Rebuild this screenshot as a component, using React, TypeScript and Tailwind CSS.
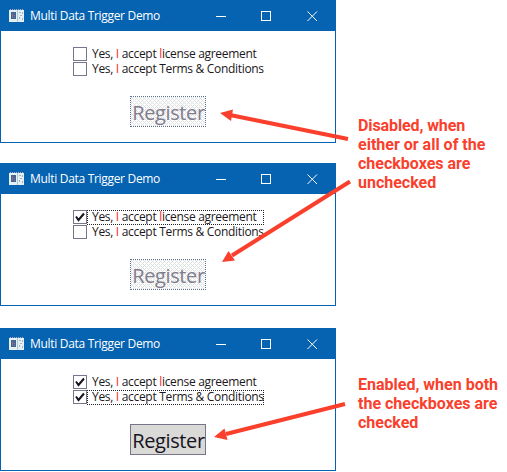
import React from "react";

type DemoProps = { id: string; first: boolean; second: boolean; focus: 0 | 1 | 2 };

const sans = "font-['Open_Sans','Noto_Sans',sans-serif]";

function AppIcon() {
  return (
    <svg width="16" height="14" viewBox="0 0 16 14" shapeRendering="crispEdges" className="shrink-0">
      <path d="M1 0.5H15" stroke="#b9a9c0" strokeDasharray="1 1" />
      <rect x="0" y="1" width="15" height="12" fill="#e4f0f4" />
      <rect x="2" y="3" width="5" height="7" fill="#44658f" />
      <path d="M3 4h1v2h2v1H4v2H3zM5 8h1v1H5z" fill="#836b91" />
      <rect x="8" y="1" width="1" height="12" fill="#a9c8da" />
      <path d="M10 3h2v1h-2zM11 6h2v1h-2zM10 8h1v2h-1zM13 3h1v2h-1zM13 9h1v2h-1z" fill="#9bb4c1" />
    </svg>
  );
}

function TitleBar() {
  return (
    <header className="flex h-[31px] items-center bg-[#0563b1] pl-[9px] text-white">
      <AppIcon />
      <span className={`${sans} ml-[5px] w-[170px] whitespace-nowrap text-[12px] leading-[16px] tracking-[-0.31px]`}>
        Multi Data Trigger Demo
      </span>
      <svg width="102" height="12" viewBox="0 0 102 12" fill="none" stroke="white" className="ml-[16px] shrink-0">
        <path d="M0 6.5h10" />
        <rect x="45.500" y="1.500" width="9" height="9" />
        <path d="M91.500 1.500l9.500 9.500M101 1.500L91.500 11" />
      </svg>
    </header>
  );
}

function CheckRow({ checked, focused, children }: { checked: boolean; focused: boolean; children: React.ReactNode }) {
  return (
    <label className="flex h-[15px] items-start">
      <span className="flex size-[14px] shrink-0 items-center justify-center border border-[#78758b] bg-white">
        {checked && (
          <svg width="12" height="12" viewBox="0 0 12 12" fill="none" stroke="#17131e" strokeWidth="2">
            <path d="M2 5.500L4.500 9L10 2.500" />
          </svg>
        )}
      </span>
      <span
        className={`${sans} flex h-[15px] w-[177px] items-start whitespace-pre border border-dotted pl-[4px] text-[12px] leading-[12px] tracking-[-0.31px] text-[#1b1720] ${
          focused ? "border-[#222027]" : "border-transparent"
        }`}
      >
        {children}
      </span>
    </label>
  );
}

function Dither({ id, enabled }: { id: string; enabled: boolean }) {
  return (
    <svg width="74" height="29" shapeRendering="crispEdges" className="absolute left-0 top-0">
      <pattern id={id} width="4" height="4" patternUnits="userSpaceOnUse">
        <rect width="4" height="4" fill={enabled ? "#cddfe3" : "#ffffff"} />
        {enabled ? (
          <path d="M0 0h1v1H0zM2 0h1v1H2zM1 1h1v1H1zM3 1h1v1H3zM0 2h1v1H0zM2 2h1v1H2zM1 3h1v1H1zM3 3h1v1H3z" fill="#e5d5ca" />
        ) : (
          <>
            <path d="M0 0h1v1H0zM2 2h1v1H2zM1 1h1v1H1z" fill="#cfe3ea" />
            <path d="M2 0h1v1H2zM0 2h1v1H0zM3 3h1v1H3z" fill="#ecdfd8" />
          </>
        )}
      </pattern>
      <rect width="74" height="29" fill={`url(#${id})`} />
    </svg>
  );
}

function DemoWindow({ id, first, second, focus }: DemoProps) {
  const enabled = first && second;
  return (
    <section className="h-[143px] w-[336px] border border-[#0563b1] bg-white">
      <div className="-mx-px -mt-px"><TitleBar /></div>
      <div className="flex flex-col pl-[72px] pt-[16px]">
        <CheckRow checked={first} focused={focus === 1}>
          Yes, <span className="font-medium text-[#ff2a1c]">I</span> accept <span className="font-medium text-[#ff2a1c]">l</span>icense agreement
        </CheckRow>
        <CheckRow checked={second} focused={focus === 2}>
          Yes, <span className="font-medium text-[#ff2a1c]">I</span> accept Terms &amp; Conditions
        </CheckRow>
      </div>
      <button
        disabled={!enabled}
        className={`${sans} relative ml-[129px] mt-[19px] flex h-[31px] w-[76px] items-center justify-center border text-[20px] leading-[28px] tracking-[-0.4px] ${
          enabled ? "border-[#78758b] text-[#17131e]" : "border-dotted border-[#5f6f90] text-[#817c8c]"
        }`}
      >
        <Dither id={id} enabled={enabled} />
        <span className="relative pl-px pt-[2px]">Register</span>
      </button>
    </section>
  );
}

const noteText = "flex flex-col whitespace-nowrap font-['Roboto',sans-serif] text-[16px] font-bold leading-[19px] text-[#fa402c]";

export default function App() {
  return (
    <main className="relative flex h-[472px] w-[507px] overflow-hidden bg-white">
      <div className="flex w-[336px] shrink-0 flex-col">
        <DemoWindow id="fill-none" first={false} second={false} focus={0} />
        <div className="mt-[20px]"><DemoWindow id="fill-one" first second={false} focus={1} /></div>
        <div className="mt-[22px]"><DemoWindow id="fill-both" first second focus={2} /></div>
      </div>
      <aside className="flex flex-col pl-[22px] pt-[116px]">
        <p className={noteText}>
          <span className="tracking-[-0.1px]">Disabled, when</span>
          <span>either or all of the</span>
          <span>checkboxes are</span>
          <span>unchecked</span>
        </p>
        <p className={`${noteText} mt-[183px]`}>
          <span>Enabled, when both</span>
          <span>the checkboxes are</span>
          <span>checked</span>
        </p>
      </aside>
      <svg className="pointer-events-none absolute left-0 top-0" width="507" height="472" viewBox="0 0 507 472" fill="#fa402c" stroke="#fa402c">
        <path d="M230 115L348 139M232 255.500L350 181.500M226 434L345 404" strokeWidth="4" fill="none" />
        <path d="M220 113L233 109.500L231 121ZM222 262L228.500 251L235 260.500ZM214 437L224.500 428.500L227.500 440Z" stroke="none" />
      </svg>
    </main>
  );
}
